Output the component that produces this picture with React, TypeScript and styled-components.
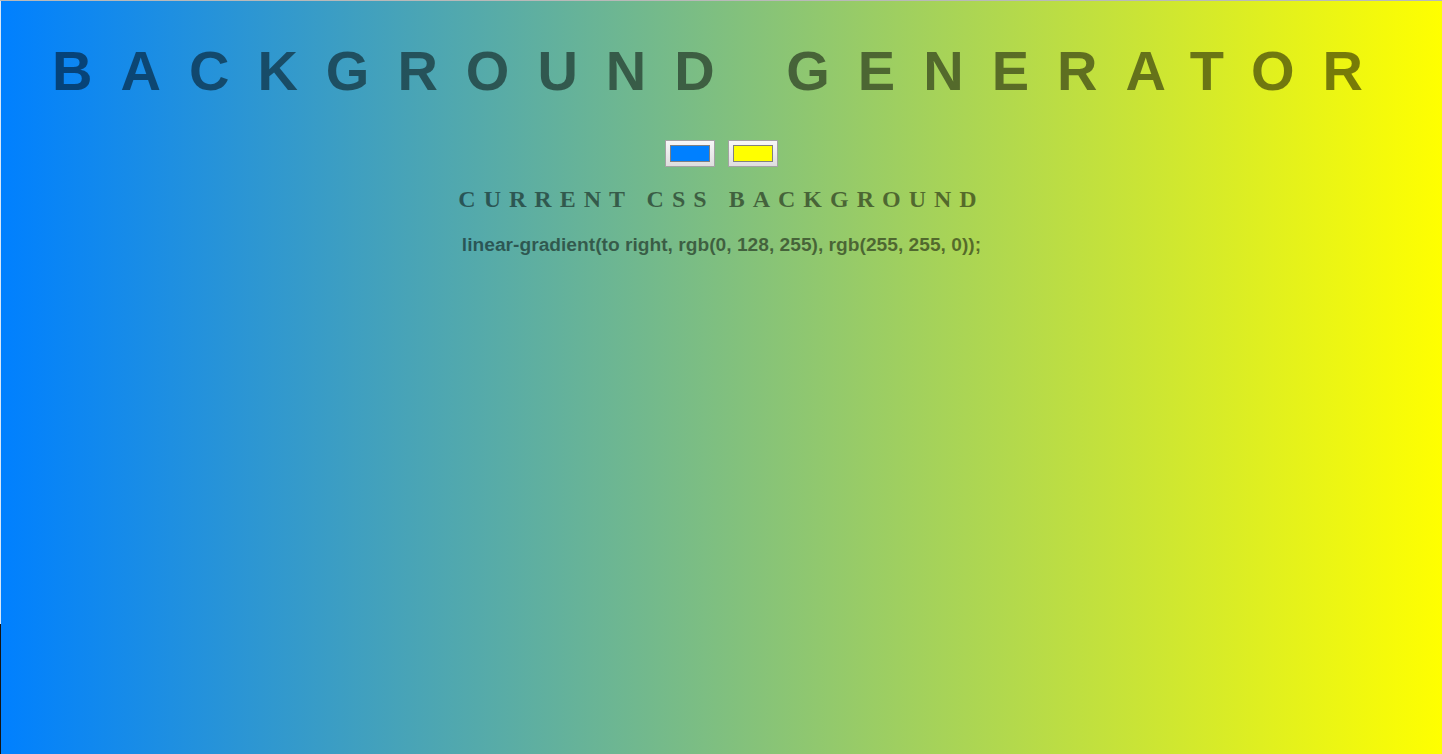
import { useState } from "react";
import styled, { createGlobalStyle } from "styled-components";

const GlobalStyle = createGlobalStyle`
  html, body {
    margin: 0;
    padding: 0;
  }
  body {
    font-family: "Liberation Sans", Arial, sans-serif;
  }
`;

const Frame = styled.div`
  display: flex;
  height: 754px;
  box-sizing: border-box;
  border-top: 1px solid #b9b9b9;
  overflow: hidden;
`;

const EdgeLine = styled.div`
  width: 1px;
  flex-shrink: 0;
  background: linear-gradient(to bottom, #d6e6f7 0 623px, #141414 623px);
`;

const Page = styled.div<{ $gradient: string }>`
  flex-grow: 1;
  background: ${(props) => props.$gradient};
  text-align: center;
`;

const Title = styled.h1`
  margin: 38px 0 0;
  font-size: 56px;
  line-height: 64px;
  font-weight: bold;
  letter-spacing: 28px;
  color: rgba(0, 0, 0, 0.5);
`;

const Pickers = styled.div`
  display: flex;
  justify-content: center;
  gap: 13px;
  margin-top: 37px;
`;

const ColorInput = styled.input`
  -webkit-appearance: none;
  appearance: none;
  width: 50px;
  height: 27px;
  margin: 0;
  padding: 0;
  box-sizing: border-box;
  border: 1px solid #a3a3a3;
  background: linear-gradient(to bottom, #f7f7f7, #dedede);
  cursor: pointer;

  &::-webkit-color-swatch-wrapper {
    padding: 4px;
  }
  &::-webkit-color-swatch {
    border: 1px solid #808080;
    border-radius: 0;
  }
`;

const SubTitle = styled.h3`
  margin: 19px 0 0;
  font-family: "Liberation Serif", "Times New Roman", serif;
  font-size: 24px;
  line-height: 27px;
  font-weight: bold;
  letter-spacing: 8px;
  color: rgba(0, 0, 0, 0.5);
`;

const CssText = styled.h3`
  margin: 21px 0 0;
  font-size: 19.2px;
  line-height: 22px;
  font-weight: bold;
  color: rgba(0, 0, 0, 0.5);
`;

const hexToRgb = (hex: string) => {
  const n = parseInt(hex.slice(1), 16);
  return `rgb(${(n >> 16) & 255}, ${(n >> 8) & 255}, ${n & 255})`;
};

const App = () => {
  const [color1, setColor1] = useState("#0080ff");
  const [color2, setColor2] = useState("#ffff00");

  const gradient = `linear-gradient(to right, ${hexToRgb(color1)}, ${hexToRgb(
    color2
  )})`;

  return (
    <>
      <GlobalStyle />
      <Frame>
        <EdgeLine />
        <Page $gradient={gradient}>
          <Title>BACKGROUND GENERATOR</Title>
          <Pickers>
            <ColorInput
              type="color"
              value={color1}
              onChange={(e) => setColor1(e.target.value)}
            />
            <ColorInput
              type="color"
              value={color2}
              onChange={(e) => setColor2(e.target.value)}
            />
          </Pickers>
          <SubTitle>CURRENT CSS BACKGROUND</SubTitle>
          <CssText>{gradient};</CssText>
        </Page>
      </Frame>
    </>
  );
};

export default App;
